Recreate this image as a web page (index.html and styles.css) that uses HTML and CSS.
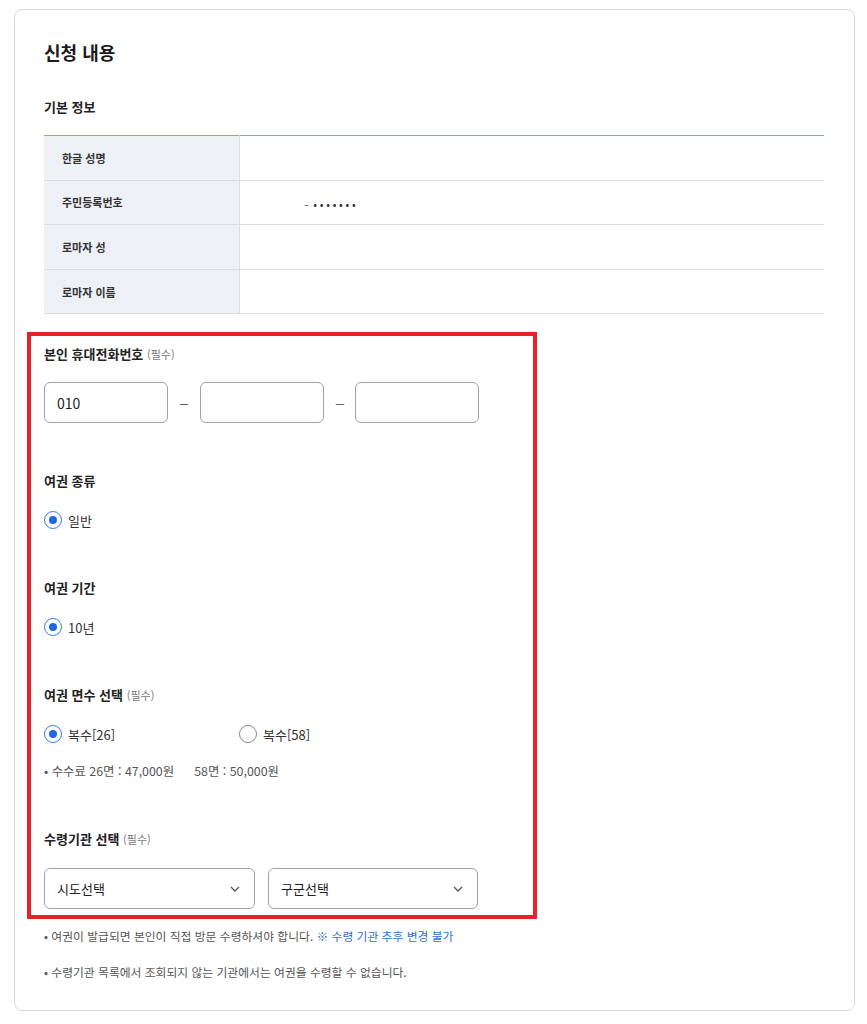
FILE: index.html
```html
<!DOCTYPE html>
<html lang="ko">
<head>
<meta charset="utf-8">
<title>신청 내용</title>
<link rel="stylesheet" href="styles.css">
</head>
<body>
<div class="card">
  <h1 class="title">신청 내용</h1>
  <h2 class="subtitle">기본 정보</h2>
  <table class="info">
    <tr><th>한글 성명</th><td></td></tr>
    <tr><th>주민등록번호</th><td><span class="rrn">-</span><span class="dots">•••••••</span></td></tr>
    <tr><th>로마자 성</th><td></td></tr>
    <tr><th>로마자 이름</th><td></td></tr>
  </table>

  <div class="highlight">
    <div class="label">본인 휴대전화번호 <span class="req">(필수)</span></div>
    <div class="phone">
      <div class="input">010</div>
      <span class="dash">–</span>
      <div class="input"></div>
      <span class="dash">–</span>
      <div class="input"></div>
    </div>

    <div class="label sec">여권 종류</div>
    <div class="radios">
      <label class="radio"><span class="dot on"></span>일반</label>
    </div>

    <div class="label sec">여권 기간</div>
    <div class="radios">
      <label class="radio"><span class="dot on"></span>10년</label>
    </div>

    <div class="label sec">여권 면수 선택 <span class="req">(필수)</span></div>
    <div class="radios">
      <label class="radio w"><span class="dot on"></span>복수[26]</label>
      <label class="radio"><span class="dot"></span>복수[58]</label>
    </div>
    <div class="fee">• 수수료 26면 : 47,000원<span class="gap"></span>58면 : 50,000원</div>

    <div class="label sec2">수령기관 선택 <span class="req">(필수)</span></div>
    <div class="selects">
      <div class="select s1">시도선택<svg class="chev" viewBox="0 0 10 6" width="10" height="6"><path d="M1 1 L5 5 L9 1" fill="none" stroke="#555" stroke-width="1.3"/></svg></div>
      <div class="select s2">구군선택<svg class="chev" viewBox="0 0 10 6" width="10" height="6"><path d="M1 1 L5 5 L9 1" fill="none" stroke="#555" stroke-width="1.3"/></svg></div>
    </div>
  </div>

  <p class="note n1">• 여권이 발급되면 본인이 직접 방문 수령하셔야 합니다. <span class="blue">※ 수령 기관 추후 변경 불가</span></p>
  <p class="note n2">• 수령기관 목록에서 조회되지 않는 기관에서는 여권을 수령할 수 없습니다.</p>
</div>
</body>
</html>
```

FILE: styles.css
```css
* { box-sizing: border-box; }
html, body { margin: 0; padding: 0; background: #fff; }
body {
  font-family: "Noto Sans CJK KR", "Noto Sans", sans-serif;
  color: #222;
  padding: 9px 12px 13px 14px;
}
.card {
  width: 841px;
  height: 1002px;
  border: 1px solid #d9d9d9;
  border-radius: 8px;
  padding: 29px 30px 30px 29px;
}
.title {
  margin: 0;
  font-size: 18px;
  line-height: 26px;
  font-weight: 700;
  color: #1a1a1a;
}
.subtitle {
  margin: 32px 0 0;
  font-size: 13px;
  line-height: 20px;
  font-weight: 700;
  color: #222;
}
.info {
  margin-top: 18px;
  width: 780px;
  border-collapse: collapse;
  border-top: 1px solid #8fa1bb;
}
.info th, .info td {
  height: 44.6px;
  border-bottom: 1px solid #dcdcdc;
  padding: 0;
}
.info th {
  width: 195px;
  background: #edf0f5;
  text-align: left;
  padding-left: 18px;
  font-size: 11px;
  font-weight: 700;
  color: #333;
  border-right: 1px solid #dcdcdc;
}
.info td { background: #fff; }
.rrn {
  margin-left: 65px;
  margin-right: 5px;
  font-size: 11px;
  color: #333;
}
.dots {
  font-size: 11px;
  letter-spacing: 2.7px;
  color: #333;
}
.highlight {
  margin: 18px 0 0 -17px;
  width: 510px;
  border: 4px solid #e8202a;
  padding: 8px 0 6px 13px;
}
.label {
  font-size: 13px;
  line-height: 20px;
  font-weight: 700;
  color: #222;
}
.label .req {
  font-size: 11px;
  font-weight: 400;
  color: #777;
}
.label.sec { margin-top: 48px; }
.label.sec2 { margin-top: 50px; }
.phone {
  margin-top: 18px;
  display: flex;
  align-items: center;
}
.input {
  width: 124px;
  height: 41px;
  border: 1px solid #a3a3a3;
  border-radius: 6px;
  padding-left: 12px;
  display: flex;
  align-items: center;
  font-size: 14px;
  color: #222;
}
.dash {
  width: 32px;
  text-align: center;
  color: #666;
  font-size: 15px;
  font-family: "Liberation Sans", sans-serif;
}
.phone .input:nth-child(5) { margin-left: -1px; }
.radios {
  margin-top: 19px;
  display: flex;
  height: 20px;
  align-items: center;
}
.radio {
  display: flex;
  align-items: center;
  font-size: 13px;
  color: #333;
}
.radio.w { width: 195px; }
.dot {
  width: 18px;
  height: 18px;
  border-radius: 50%;
  border: 1.5px solid #8a8a8a;
  margin-right: 6px;
  position: relative;
  flex: none;
}
.dot.on { border-color: #3d7be8; }
.dot.on::after {
  content: "";
  position: absolute;
  left: 50%;
  top: 50%;
  width: 8px;
  height: 8px;
  margin: -4px 0 0 -4px;
  border-radius: 50%;
  background: #1f66e0;
}
.fee {
  margin-top: 19px;
  font-size: 12.4px;
  line-height: 16px;
  color: #555;
}
.fee .gap { display: inline-block; width: 20px; }
.selects {
  margin-top: 19px;
  display: flex;
  gap: 13px;
}
.select {
  height: 41px;
  border: 1px solid #a3a3a3;
  border-radius: 6px;
  padding: 0 14px 0 12px;
  display: flex;
  align-items: center;
  justify-content: space-between;
  font-size: 13px;
  color: #222;
}
.select.s1 { width: 211px; }
.select.s2 { width: 210px; }
.note {
  margin: 0;
  font-size: 11.8px;
  line-height: 16px;
  color: #555;
}
.note.n1 { margin-top: 9px; }
.note.n2 { margin-top: 20px; }
.blue { color: #2f6fd6; }
```
